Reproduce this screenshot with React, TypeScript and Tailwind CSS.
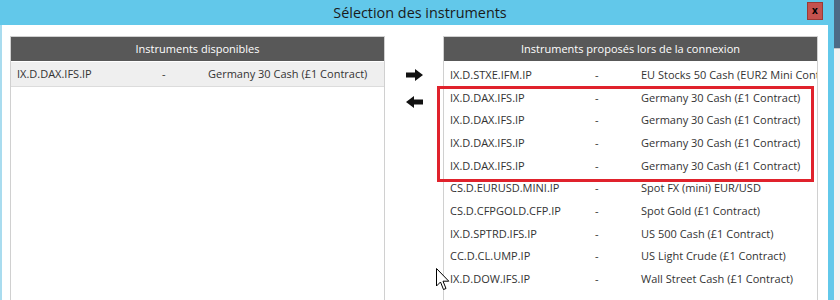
import React from "react";

const rightRows: [string, string][] = [
  ["IX.D.STXE.IFM.IP", "EU Stocks 50 Cash (EUR2 Mini Contract)"],
  ["IX.D.DAX.IFS.IP", "Germany 30 Cash (£1 Contract)"],
  ["IX.D.DAX.IFS.IP", "Germany 30 Cash (£1 Contract)"],
  ["IX.D.DAX.IFS.IP", "Germany 30 Cash (£1 Contract)"],
  ["IX.D.DAX.IFS.IP", "Germany 30 Cash (£1 Contract)"],
  ["CS.D.EURUSD.MINI.IP", "Spot FX (mini) EUR/USD"],
  ["CS.D.CFPGOLD.CFP.IP", "Spot Gold (£1 Contract)"],
  ["IX.D.SPTRD.IFS.IP", "US 500 Cash (£1 Contract)"],
  ["CC.D.CL.UMP.IP", "US Light Crude (£1 Contract)"],
  ["IX.D.DOW.IFS.IP", "Wall Street Cash (£1 Contract)"],
];

function Row({ code, name, h }: { code: string; name: string; h: string }) {
  return (
    <div className={`flex items-center whitespace-nowrap ${h}`}>
      <div className="w-[151px] shrink-0 pl-[6px]">{code}</div>
      <div className="w-[46px] shrink-0">-</div>
      <div className="shrink-0">{name}</div>
    </div>
  );
}

export default function App() {
  return (
    <div
      className="relative w-[840px] h-[300px] overflow-hidden flex bg-white text-[11px] text-[#333]"
      style={{ fontFamily: '"Open Sans", "Noto Sans", sans-serif' }}
    >
      <div className="w-[834px] shrink-0 flex flex-col">
        <div className="relative h-[25px] bg-[#62c8ea] flex items-center justify-center">
          <span className="text-[14.4px] text-[#1a1a1a] ml-[6px]">Sélection des instruments</span>
          <div className="absolute right-[11px] top-[2px] w-[16px] h-[18px] bg-[#c4524e] border border-[#9b3a36] flex items-center justify-center">
            <span className="text-[10px] font-bold text-black leading-none -mt-[2px]">x</span>
          </div>
        </div>
        <div className="flex-1 flex border-l-2 border-l-[#a9dcef] border-r-[6px] border-r-[#62c8ea] pl-[8px] pt-[11px]">
          {/* left panel */}
          <div className="w-[375px] shrink-0 border border-[#d0d0d0] border-b-0 flex flex-col">
            <div className="h-[24px] bg-[#585858] text-white flex items-center justify-center">
              Instruments disponibles
            </div>
            <div className="mt-[1px] bg-[#efefef] border-b border-[#dcdcdc]">
              <Row code="IX.D.DAX.IFS.IP" name="Germany 30 Cash (£1 Contract)" h="h-[24px]" />
            </div>
          </div>
          {/* arrows */}
          <div className="w-[58px] shrink-0 flex flex-col items-center pt-[33px] gap-[15px]">
            <svg width="17" height="12" viewBox="0 0 17 12" className="ml-[1px]">
              <path d="M0 3.5 H9 V0 L17 6 L9 12 V8.5 H0 Z" fill="#111" />
            </svg>
            <svg width="17" height="12" viewBox="0 0 17 12" className="ml-[1px]">
              <path d="M17 3.5 H8 V0 L0 6 L8 12 V8.5 H17 Z" fill="#111" />
            </svg>
          </div>
          {/* right panel */}
          <div className="w-[375px] shrink-0 border border-[#d0d0d0] border-b-0 flex flex-col overflow-hidden">
            <div className="h-[24px] bg-[#585858] text-white flex items-center justify-center">
              Instruments proposés lors de la connexion
            </div>
            <div className="pt-[3px]">
              {rightRows.map(([c, n], i) => (
                <Row key={i} code={c} name={n} h="h-[22.67px]" />
              ))}
            </div>
          </div>
        </div>
      </div>
      {/* background app edge */}
      <div className="flex-1 flex flex-col">
        <div className="h-[48px] bg-[#4d6b86]" />
        <div className="flex-1 bg-[#f2f2f2] border-t border-[#c8c8c8]" />
      </div>

      {/* red annotation box */}
      <div className="absolute left-[437px] top-[86px] w-[377px] h-[96px] border-[3px] border-[#e0222c]" />

      {/* mouse cursor */}
      <svg className="absolute left-[436px] top-[268px]" width="14" height="23" viewBox="0 0 14 23">
        <path d="M0.5 0.5 L0.5 18 L4.5 14 L7.5 21.5 L10 20.5 L7 13.2 L12.8 13.2 Z" fill="#fff" stroke="#000" strokeWidth="1" strokeLinejoin="miter" />
      </svg>
    </div>
  );
}
